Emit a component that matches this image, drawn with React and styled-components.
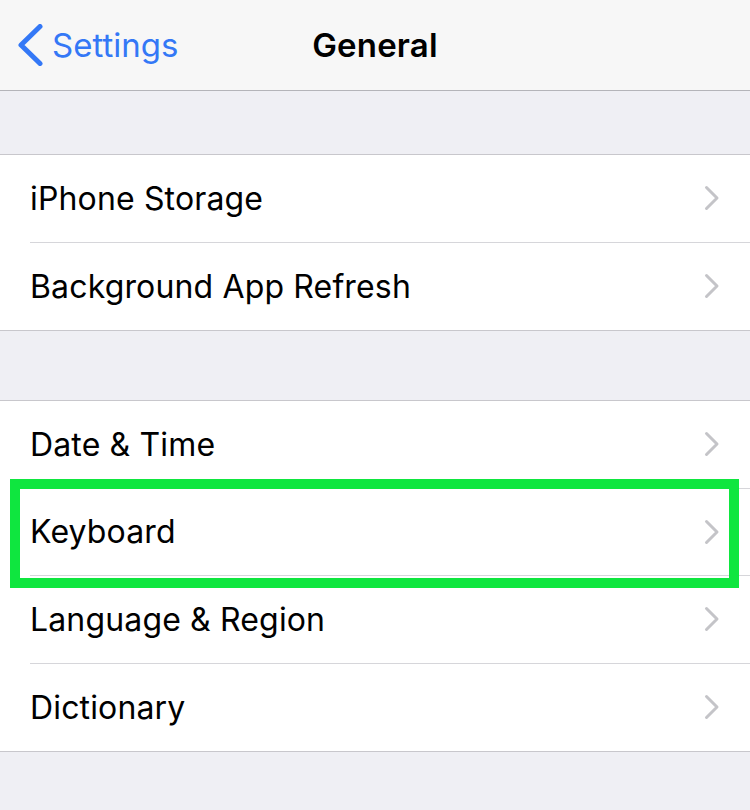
import React from 'react'
import styled, { createGlobalStyle } from 'styled-components'

const GlobalStyle = createGlobalStyle`
  html, body {
    margin: 0;
    padding: 0;
    background: #efeff4;
  }

  body {
    font-family: Inter, "Noto Sans", "Liberation Sans", sans-serif;
    -webkit-font-smoothing: antialiased;
  }
`

const Screen = styled.div`
  width: 750px;
  min-height: 810px;
  background: #efeff4;
`

const NavBar = styled.header`
  position: relative;
  display: flex;
  align-items: center;
  justify-content: center;
  height: 90px;
  background: #f7f7f7;
  border-bottom: 1px solid #b4b4b9;
`

const BackButton = styled.div`
  position: absolute;
  left: 17px;
  top: 0;
  bottom: 0;
  display: flex;
  align-items: center;
  gap: 9px;
  color: #3478f6;
  font-size: 33px;
`

const Title = styled.h1`
  margin: 0;
  font-size: 33px;
  font-weight: 600;
  color: #000;
  letter-spacing: 0.2px;
`

const Group = styled.section`
  margin-top: ${(p) => p.gap}px;
  background: #fff;
  border-top: 1px solid #c8c7cc;
  border-bottom: 1px solid #c8c7cc;
`

const Row = styled.div`
  position: relative;
  display: flex;
  padding-left: 30px;
  background: #fff;
`

const RowInner = styled.div`
  flex: 1;
  display: flex;
  align-items: center;
  justify-content: space-between;
  height: 87.5px;
  box-sizing: border-box;
  padding-right: 30px;
  border-bottom: ${(p) => (p.last ? 'none' : '1px solid #d6d6da')};
`

const Label = styled.span`
  font-size: 32px;
  color: #000;
  letter-spacing: 0.15px;
`

const Highlight = styled.div`
  position: absolute;
  z-index: 1;
  left: 10px;
  right: 11px;
  top: -10px;
  bottom: -12px;
  border: 10px solid #0fe63f;
  pointer-events: none;
`

const BackChevron = () => (
  <svg width="26" height="42" viewBox="0 0 26 42">
    <path
      d="M23 2.5 L4 21 L23 39.5"
      fill="none"
      stroke="#3478f6"
      strokeWidth="5"
      strokeLinecap="round"
      strokeLinejoin="round"
    />
  </svg>
)

const Disclosure = () => (
  <svg width="16" height="26" viewBox="0 0 16 26">
    <path
      d="M2.5 2.5 L13 13 L2.5 23.5"
      fill="none"
      stroke="#c4c4c8"
      strokeWidth="3"
      strokeLinecap="round"
      strokeLinejoin="round"
    />
  </svg>
)

const groups = [
  { gap: 63, items: ['iPhone Storage', 'Background App Refresh'] },
  { gap: 69, items: ['Date & Time', 'Keyboard', 'Language & Region', 'Dictionary'] },
]

const App = () => (
  <Screen>
    <GlobalStyle />
    <NavBar>
      <BackButton>
        <BackChevron />
        <span>Settings</span>
      </BackButton>
      <Title>General</Title>
    </NavBar>

    {groups.map((group, gi) => (
      <Group key={gi} gap={group.gap}>
        {group.items.map((label, i) => (
          <Row key={label}>
            <RowInner last={i === group.items.length - 1}>
              <Label>{label}</Label>
              <Disclosure />
            </RowInner>
            {label === 'Keyboard' && <Highlight />}
          </Row>
        ))}
      </Group>
    ))}
  </Screen>
)

export default App
